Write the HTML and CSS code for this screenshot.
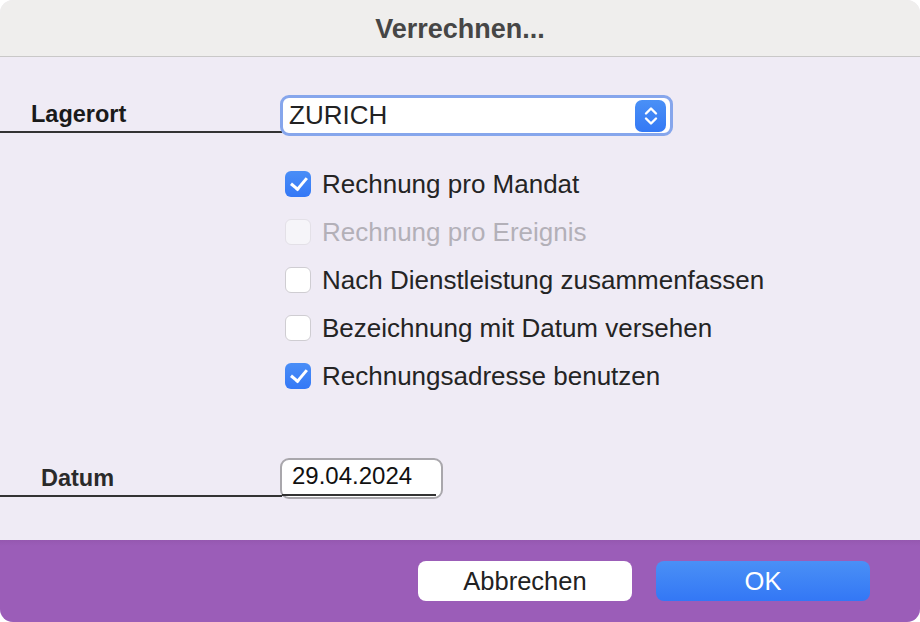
FILE: index.html
```html
<!DOCTYPE html>
<html lang="de">
<head>
    <meta charset="UTF-8">
    <title>Verrechnen...</title>
    <link rel="stylesheet" href="styles.css">
</head>
<body>

<div class="window">
    <header class="titlebar">Verrechnen...</header>

    <section class="content">
        <div class="row row-lagerort">
            <div class="label label-lagerort">Lagerort</div>
            <div class="select">
                <span class="select-value">ZURICH</span>
                <span class="stepper">
                    <svg width="18" height="24" viewBox="0 0 18 24">
                        <path d="M4 9.5 L9 4.5 L14 9.5" fill="none" stroke="#fff" stroke-width="2.4" stroke-linecap="round" stroke-linejoin="round"/>
                        <path d="M4 14.5 L9 19.5 L14 14.5" fill="none" stroke="#fff" stroke-width="2.4" stroke-linecap="round" stroke-linejoin="round"/>
                    </svg>
                </span>
            </div>
        </div>

        <ul class="options">
            <li class="option"><span class="box checked"></span>Rechnung pro Mandat</li>
            <li class="option disabled"><span class="box"></span>Rechnung pro Ereignis</li>
            <li class="option"><span class="box"></span>Nach Dienstleistung zusammenfassen</li>
            <li class="option"><span class="box"></span>Bezeichnung mit Datum versehen</li>
            <li class="option"><span class="box checked"></span>Rechnungsadresse benutzen</li>
        </ul>

        <div class="row row-datum">
            <div class="label label-datum">Datum</div>
            <div class="datefield">
                <span class="date-value">29.04.2024</span>
            </div>
        </div>
    </section>

    <footer class="actions">
        <button class="btn btn-cancel">Abbrechen</button>
        <button class="btn btn-ok">OK</button>
    </footer>
</div>

</body>
</html>
```

FILE: styles.css
```css
body {
    margin: 0;
    padding: 0;
    background-color: #ffffff;
    font-family: "Liberation Sans", Arial, sans-serif;
    color: #222;
}

.window {
    width: 920px;
    height: 622px;
    border-radius: 13px;
    overflow: hidden;
    display: flex;
    flex-direction: column;
    background-color: #efebf5;
}

.titlebar {
    height: 56px;
    flex: none;
    background-color: #efeeed;
    border-bottom: 1px solid #c9c8c8;
    display: flex;
    align-items: center;
    justify-content: center;
    font-size: 27px;
    font-weight: bold;
    color: #464646;
    padding-top: 2px;
    box-sizing: border-box;
    height: 57px;
}

.content {
    flex: 1;
    padding-top: 38px;
}

.row {
    display: flex;
    align-items: flex-end;
}

.label {
    width: 282px;
    flex: none;
    box-sizing: border-box;
    border-bottom: 2px solid #333;
    font-weight: bold;
    font-size: 23.5px;
    color: #1a1a1a;
    padding-bottom: 3px;
    margin-right: -2px;
}

.label-lagerort {
    padding-left: 31px;
    margin-bottom: 3px;
}

.label-datum {
    padding-left: 41px;
    color: #2a2a2a;
    margin-bottom: 2px;
}

.select {
    width: 393px;
    height: 41px;
    box-sizing: border-box;
    border: 3px solid #86a6ec;
    border-radius: 9px;
    background-color: #fff;
    display: flex;
    align-items: center;
    justify-content: space-between;
    padding: 0 4px 0 6px;
}

.select-value {
    font-size: 26px;
    color: #222;
}

.stepper {
    width: 31px;
    height: 32px;
    border-radius: 7px;
    background: linear-gradient(#4a90f6, #3479f5);
    display: flex;
    align-items: center;
    justify-content: center;
}

.options {
    list-style: none;
    margin: 24px 0 58px 285px;
    padding: 0;
}

.option {
    height: 48px;
    display: flex;
    align-items: center;
    font-size: 26px;
    color: #242424;
}

.option.disabled {
    color: #b3b0b8;
}

.box {
    width: 26px;
    height: 26px;
    box-sizing: border-box;
    border-radius: 6px;
    border: 1px solid #cfcdd2;
    background-color: #fff;
    margin-right: 11px;
    position: relative;
}

.option.disabled .box {
    background-color: #f6f5f9;
    border-color: #e3e0e7;
}

.box.checked {
    border: none;
    background: linear-gradient(#4a8ef7, #3478f6);
}

.box.checked::after {
    content: "";
    position: absolute;
    left: 9px;
    top: 3px;
    width: 7px;
    height: 13px;
    border-right: 3px solid #fff;
    border-bottom: 3px solid #fff;
    transform: rotate(40deg);
}

.datefield {
    width: 163px;
    height: 41px;
    box-sizing: border-box;
    border: 2px solid #a9a7ac;
    border-radius: 9px;
    background-color: #fff;
    padding: 0 5px 0 10px;
    display: flex;
    flex-direction: column;
    justify-content: flex-end;
}

.date-value {
    font-size: 24px;
    color: #111;
    border-bottom: 2px solid #333;
    padding-bottom: 4px;
    margin-left: -10px;
    padding-left: 10px;
    margin-bottom: 1px;
}

.actions {
    height: 82px;
    flex: none;
    background: linear-gradient(#9558b0, #9b5db8 6px);
    display: flex;
    align-items: center;
    justify-content: flex-end;
    gap: 24px;
    padding-right: 50px;
}

.btn {
    width: 214px;
    height: 40px;
    border: none;
    border-radius: 8px;
    font-family: "Liberation Sans", Arial, sans-serif;
    font-size: 25.5px;
    cursor: pointer;
}

.btn-cancel {
    background-color: #fff;
    color: #222;
}

.btn-ok {
    background: linear-gradient(#4a90f6, #3377f5);
    color: #fff;
}
```
